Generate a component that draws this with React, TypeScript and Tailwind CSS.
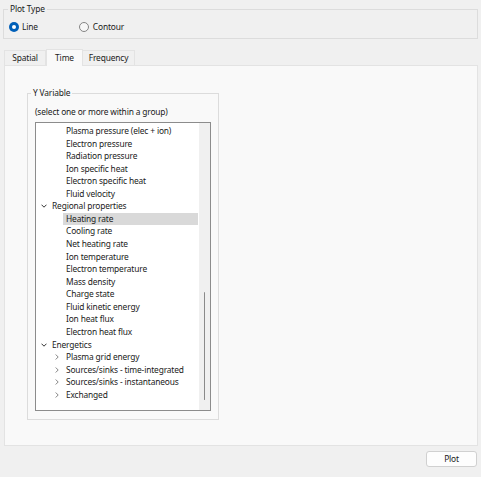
import React from 'react';

type Row = { label: string; level: 'group' | 'sub' | 'leaf'; open?: boolean; selected?: boolean };

const rows: Row[] = [
  { label: 'Plasma pressure (elec + ion)', level: 'leaf' },
  { label: 'Electron pressure', level: 'leaf' },
  { label: 'Radiation pressure', level: 'leaf' },
  { label: 'Ion specific heat', level: 'leaf' },
  { label: 'Electron specific heat', level: 'leaf' },
  { label: 'Fluid velocity', level: 'leaf' },
  { label: 'Regional properties', level: 'group', open: true },
  { label: 'Heating rate', level: 'leaf', selected: true },
  { label: 'Cooling rate', level: 'leaf' },
  { label: 'Net heating rate', level: 'leaf' },
  { label: 'Ion temperature', level: 'leaf' },
  { label: 'Electron temperature', level: 'leaf' },
  { label: 'Mass density', level: 'leaf' },
  { label: 'Charge state', level: 'leaf' },
  { label: 'Fluid kinetic energy', level: 'leaf' },
  { label: 'Ion heat flux', level: 'leaf' },
  { label: 'Electron heat flux', level: 'leaf' },
  { label: 'Energetics', level: 'group', open: true },
  { label: 'Plasma grid energy', level: 'sub' },
  { label: 'Sources/sinks - time-integrated', level: 'sub' },
  { label: 'Sources/sinks - instantaneous', level: 'sub' },
  { label: 'Exchanged', level: 'sub' },
];

const ChevronDown = () => (
  <svg width="6" height="4" viewBox="0 0 6 4" className="block">
    <path d="M0.5 0.7 L3 3.2 L5.5 0.7" fill="none" stroke="#333" strokeWidth="1" />
  </svg>
);

const ChevronRight = () => (
  <svg width="4" height="6" viewBox="0 0 4 6" className="block">
    <path d="M0.7 0.5 L3.2 3 L0.7 5.5" fill="none" stroke="#777" strokeWidth="0.9" />
  </svg>
);

function TreeRow({ row }: { row: Row }) {
  if (row.level === 'group') {
    return (
      <div className="flex items-center h-[12.57px] pl-[2px]">
        <div className="w-[14px] pl-[3px] flex items-center">
          <ChevronDown />
        </div>
        <span>{row.label}</span>
      </div>
    );
  }
  if (row.level === 'sub') {
    return (
      <div className="flex items-center h-[12.57px] pl-[16px]">
        <div className="w-[14px] pl-[3px] flex items-center">
          <ChevronRight />
        </div>
        <span>{row.label}</span>
      </div>
    );
  }
  return (
    <div className="flex items-center h-[12.57px] pl-[27px]">
      <div className={`flex-1 h-full flex items-center pl-[3px] ${row.selected ? 'bg-[#d9d9d9]' : ''}`}>
        {row.label}
      </div>
    </div>
  );
}

export default function App() {
  return (
    <div className="w-[481px] h-[477px] bg-[#f0f0f0] pt-[3px] flex flex-col text-[8.4px] tracking-[-0.15px] leading-[12px] text-[#1a1a1a] font-['Segoe_UI','Noto_Sans',sans-serif]">
      {/* Plot Type */}
      <fieldset className="ml-[3px] w-[475px] border border-[#dcdcdc] pb-[5px]">
        <legend className="ml-[4px] px-[2px] leading-[12px]">Plot Type</legend>
        <div className="flex items-center h-[12px] mt-[6px] pl-[5px]">
          <div className="w-[10px] h-[10px] rounded-full bg-[#005fb8] flex items-center justify-center">
            <div className="w-[4px] h-[4px] rounded-full bg-white" />
          </div>
          <span className="ml-[3px]">Line</span>
          <div className="ml-[41px] w-[10px] h-[10px] rounded-full border border-[#858585] bg-[#f7f7f7]" />
          <span className="ml-[4px]">Contour</span>
        </div>
      </fieldset>

      {/* Tabs */}
      <div className="mt-[9px] ml-[4px] flex items-end h-[17px]">
        <div className="w-[42px] h-[15px] border border-b-0 border-[#e3e3e3] bg-[#f0f0f0] flex items-center justify-center">Spatial</div>
        <div className="w-[37px] h-[17px] border border-b-0 border-[#e3e3e3] bg-[#f9f9f9] flex items-center justify-center relative z-10 -mb-px pb-[1px]">Time</div>
        <div className="w-[52px] h-[15px] border border-b-0 border-l-0 border-[#e3e3e3] bg-[#f0f0f0] flex items-center justify-center">Frequency</div>
      </div>

      {/* Tab panel */}
      <div className="ml-[4px] w-[474px] h-[381px] bg-[#f9f9f9] border border-[#e3e3e3] pt-[21px]">
        <fieldset className="ml-[22px] w-[192px] border border-[#dcdcdc] pb-[8px]">
          <legend className="ml-[3px] px-[2px] leading-[12px]">Y Variable</legend>
          <div className="mt-[7px] pl-[7px] leading-[12px]">(select one or more within a group)</div>
          <div className="mt-[4px] ml-[7px] w-[176px] h-[289px] border border-[#8c8c8c] bg-white flex">
            <div className="flex-1 pt-[1.7px] pr-[1px]">
              {rows.map((r) => (
                <TreeRow key={r.label} row={r} />
              ))}
            </div>
            <div className="w-[11px] bg-[#f0f0f0] flex justify-center">
              <div className="mt-[169px] w-[1.5px] h-[108px] bg-[#8a8a8a] rounded-full" />
            </div>
          </div>
        </fieldset>
      </div>

      {/* Footer */}
      <div className="flex justify-end pr-[4px] mt-[5px]">
        <button className="w-[51px] h-[16px] rounded-[3px] border border-[#d0d0d0] bg-[#fdfdfd] flex items-center justify-center">
          Plot
        </button>
      </div>
    </div>
  );
}
